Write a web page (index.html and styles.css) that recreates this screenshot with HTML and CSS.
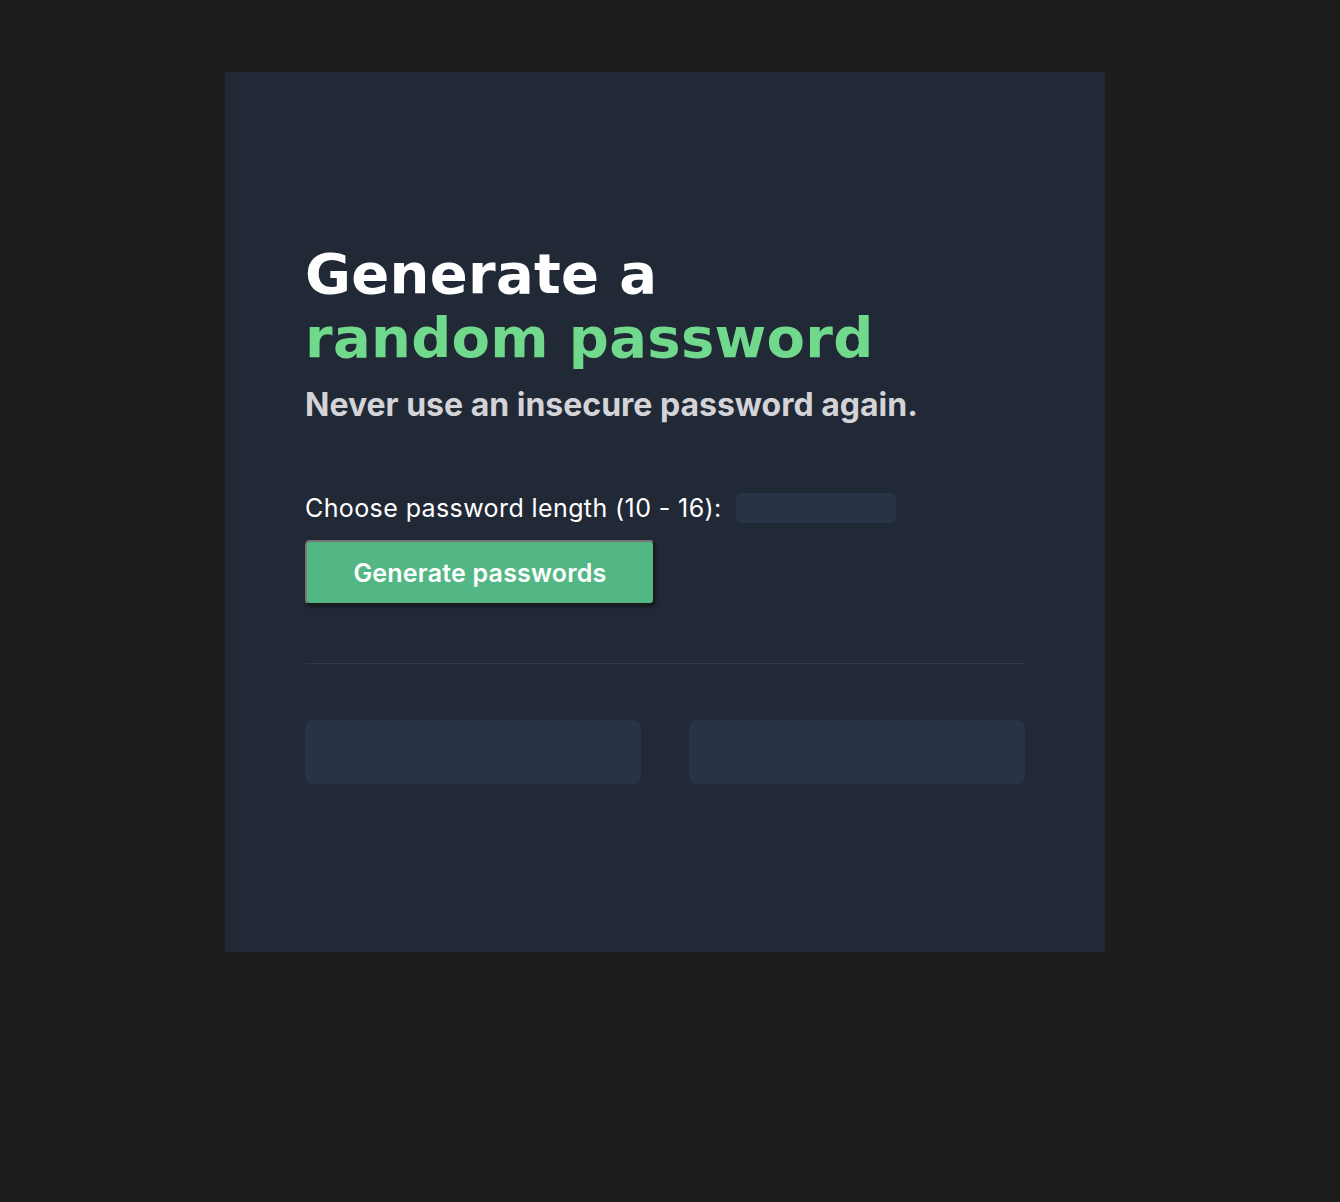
FILE: index.html
```html
<!DOCTYPE html>
<html lang="en">
<head>
<meta charset="utf-8">
<title>Password Generator</title>
<link rel="stylesheet" href="styles.css">
</head>
<body>
<main class="card">
  <div class="content">
    <h1 class="title">Generate a<br><span class="accent">random password</span></h1>
    <p class="subtitle">Never use an insecure password again.</p>
    <div class="length-row">
      <label class="label" for="len">Choose password length (10 - 16):</label>
      <input class="length-input" id="len" type="number">
    </div>
    <button class="generate-btn" type="button">Generate passwords</button>
    <hr class="divider">
    <div class="results">
      <div class="result"></div>
      <div class="result"></div>
    </div>
  </div>
</main>
</body>
</html>
```

FILE: styles.css
```css
html, body {
  margin: 0;
  padding: 0;
}
body {
  background: #1c1c1c;
  font-family: Inter, "Noto Sans", sans-serif;
  min-height: 1202px;
  padding-top: 72px;
  box-sizing: border-box;
}
.card {
  width: 880px;
  height: 880px;
  margin-left: 225px;
  background: #212936;
  box-sizing: border-box;
  padding: 170px 80px 0;
}
.content {
  width: 720px;
}
.title {
  margin: 0;
  font-family: "DejaVu Sans", Inter, sans-serif;
  font-size: 56px;
  line-height: 64px;
  font-weight: 700;
  letter-spacing: 0.3px;
  color: #ffffff;
}
.accent {
  color: #70d98b;
}
.subtitle {
  margin: 15px 0 0;
  font-size: 32px;
  line-height: 40px;
  font-weight: 700;
  color: #d4d4d8;
}
.length-row {
  display: flex;
  align-items: center;
  gap: 14px;
  margin-top: 68px;
  height: 30px;
}
.label {
  font-size: 25px;
  line-height: 30px;
  letter-spacing: 0.4px;
  color: #ffffff;
}
.length-input {
  width: 160px;
  height: 30px;
  border: none;
  border-radius: 6px;
  background: #283446;
  padding: 0;
  box-sizing: border-box;
}
.generate-btn {
  display: block;
  margin-top: 17px;
  width: 350px;
  height: 65px;
  box-sizing: border-box;
  background: #53b785;
  color: #ffffff;
  font-family: Inter, "Noto Sans", sans-serif;
  font-size: 25px;
  font-weight: 600;
  letter-spacing: 0.2px;
  border-width: 2px;
  border-style: solid;
  border-color: #767676 #1a1a1a #1a1a1a #767676;
  border-radius: 5px;
  box-shadow: 1px 2px 3px rgba(0,0,0,0.35);
  padding: 0;
}
.divider {
  margin: 58px 0 0;
  border: none;
  border-top: 1px solid #2e3a4a;
  height: 0;
}
.results {
  display: grid;
  grid-template-columns: 1fr 1fr;
  gap: 48px;
  margin-top: 56px;
}
.result {
  height: 64px;
  background: #283446;
  border-radius: 8px;
}
```
